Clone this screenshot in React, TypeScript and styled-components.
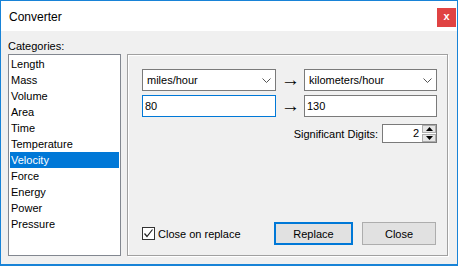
import React, { useState } from "react";
import styled, { createGlobalStyle } from "styled-components";

const GlobalStyle = createGlobalStyle`
  html, body {
    margin: 0;
    padding: 0;
    background: #ffffff;
  }
  * {
    box-sizing: border-box;
  }
`;

const categories = [
  "Length",
  "Mass",
  "Volume",
  "Area",
  "Time",
  "Temperature",
  "Velocity",
  "Force",
  "Energy",
  "Power",
  "Pressure",
];

const Window = styled.div`
  width: 458px;
  height: 266px;
  border: 1px solid #1883d7;
  border-bottom-width: 2px;
  display: flex;
  flex-direction: column;
  font-family: "Liberation Sans", Arial, sans-serif;
  font-size: 11px;
  color: #000;
`;

const TitleBar = styled.div`
  height: 30px;
  flex: none;
  background: #fff;
  display: flex;
  align-items: flex-start;
  justify-content: space-between;
  padding-left: 8px;
`;

const Title = styled.div`
  font-size: 12px;
  line-height: 16px;
  margin-top: 8px;
`;

const CloseBox = styled.div`
  width: 19px;
  height: 19px;
  margin-top: 7px;
  margin-right: 1px;
  background: #e04343;
  color: #fff;
  font-weight: bold;
  font-size: 11px;
  line-height: 17px;
  text-align: center;
`;

const Body = styled.div`
  flex: 1;
  background: #f0f0f0;
  padding: 7px 9px 8px 7px;
  display: grid;
  grid-template-columns: 113px 321px;
  grid-template-rows: 16px 202px;
  column-gap: 6px;
`;

const Label = styled.div`
  line-height: 16px;
  white-space: nowrap;
`;

const ListBox = styled.div`
  grid-column: 1;
  grid-row: 2;
  background: #fff;
  border: 1px solid #828790;
  padding: 1px;
`;

const ListItem = styled.div<{ $selected?: boolean }>`
  height: 16px;
  line-height: 16px;
  padding-left: 1px;
  background: ${(p) => (p.$selected ? "#0078d7" : "transparent")};
  color: ${(p) => (p.$selected ? "#fff" : "#000")};
`;

const Group = styled.div`
  grid-column: 2;
  grid-row: 2;
  border: 1px solid #a0a0a0;
  box-shadow: inset 1px 1px 0 #fff, 1px 1px 0 #fff;
  padding: 14px 10px 10px 14px;
  display: flex;
  flex-direction: column;
`;

const Row = styled.div<{ $mt?: number }>`
  display: flex;
  align-items: center;
  margin-top: ${(p) => p.$mt ?? 0}px;
`;

const Field = styled.div<{ $width: number; $focused?: boolean; $pad?: number }>`
  width: ${(p) => p.$width}px;
  height: 22px;
  background: #fff;
  border: 1px solid ${(p) => (p.$focused ? "#0078d7" : "#7a7a7a")};
  padding-left: ${(p) => p.$pad ?? 2}px;
  padding-right: 4px;
  display: flex;
  align-items: center;
  justify-content: space-between;
  line-height: 20px;
`;

const Arrow = styled.div`
  width: 28px;
  height: 22px;
  text-align: center;
  font-family: "Liberation Sans", sans-serif;
  font-size: 19px;
  line-height: 22px;
  padding-left: 1px;
`;

const SigRow = styled.div`
  display: flex;
  justify-content: flex-end;
  align-items: center;
  gap: 4px;
  margin-top: 7px;
  height: 19px;
`;

const Spin = styled.div`
  width: 55px;
  height: 19px;
  background: #fff;
  border: 1px solid #7a7a7a;
  display: flex;
`;

const SpinValue = styled.div`
  flex: 1;
  text-align: right;
  line-height: 17px;
  padding-right: 3px;
`;

const SpinButtons = styled.div`
  width: 14px;
  display: flex;
  flex-direction: column;
  gap: 1px;
`;

const SpinButton = styled.div`
  flex: 1;
  background: #e5e5e5;
  border: 1px solid #acacac;
  display: flex;
  align-items: center;
  justify-content: center;
`;

const Spacer = styled.div`
  flex: 1;
`;

const BottomRow = styled.div`
  display: flex;
  align-items: center;
  height: 23px;
`;

const CheckLabel = styled.label`
  display: flex;
  align-items: center;
  gap: 3px;
  line-height: 16px;
`;

const CheckBox = styled.div`
  width: 13px;
  height: 13px;
  border: 1px solid #333;
  background: #fff;
  display: flex;
  align-items: center;
  justify-content: center;
`;

const Button = styled.div<{ $width: number; $default?: boolean }>`
  width: ${(p) => p.$width}px;
  height: 23px;
  background: #e1e1e1;
  border: ${(p) => (p.$default ? "2px solid #0078d7" : "1px solid #adadad")};
  display: flex;
  align-items: center;
  justify-content: center;
  margin-left: ${(p) => (p.$default ? 0 : 9)}px;
  margin-right: ${(p) => (p.$default ? 0 : 1)}px;
`;

const Chevron = () => (
  <svg width="9" height="5" viewBox="0 0 9 5">
    <polyline points="0.5,0.5 4.5,4.5 8.5,0.5" fill="none" stroke="#555" strokeWidth="1" />
  </svg>
);

const Tri = ({ up }: { up?: boolean }) => (
  <svg width="7" height="4" viewBox="0 0 7 4">
    <polygon points={up ? "3.5,0 7,4 0,4" : "0,0 7,0 3.5,4"} fill="#000" />
  </svg>
);

export default function App() {
  const [selected] = useState("Velocity");
  return (
    <>
      <GlobalStyle />
      <Window>
        <TitleBar>
          <Title>Converter</Title>
          <CloseBox>x</CloseBox>
        </TitleBar>
        <Body>
          <Label>Categories:</Label>
          <ListBox>
            {categories.map((c) => (
              <ListItem key={c} $selected={c === selected}>
                {c}
              </ListItem>
            ))}
          </ListBox>
          <Group>
            <Row>
              <Field $width={134} $pad={4}>
                <span>miles/hour</span>
                <Chevron />
              </Field>
              <Arrow>→</Arrow>
              <Field $width={133} $pad={4}>
                <span>kilometers/hour</span>
                <Chevron />
              </Field>
            </Row>
            <Row $mt={4}>
              <Field $width={134} $focused>
                <span>80</span>
              </Field>
              <Arrow>→</Arrow>
              <Field $width={133}>
                <span>130</span>
              </Field>
            </Row>
            <SigRow>
              <Label>Significant Digits:</Label>
              <Spin>
                <SpinValue>2</SpinValue>
                <SpinButtons>
                  <SpinButton>
                    <Tri up />
                  </SpinButton>
                  <SpinButton>
                    <Tri />
                  </SpinButton>
                </SpinButtons>
              </Spin>
            </SigRow>
            <Spacer />
            <BottomRow>
              <CheckLabel>
                <CheckBox>
                  <svg width="11" height="11" viewBox="0 0 11 11">
                    <polyline points="1.5,5.5 4,8.5 9.5,1.5" fill="none" stroke="#222" strokeWidth="1.2" />
                  </svg>
                </CheckBox>
                Close on replace
              </CheckLabel>
              <Spacer />
              <Button $width={79} $default>
                Replace
              </Button>
              <Button $width={74}>Close</Button>
            </BottomRow>
          </Group>
        </Body>
      </Window>
    </>
  );
}
